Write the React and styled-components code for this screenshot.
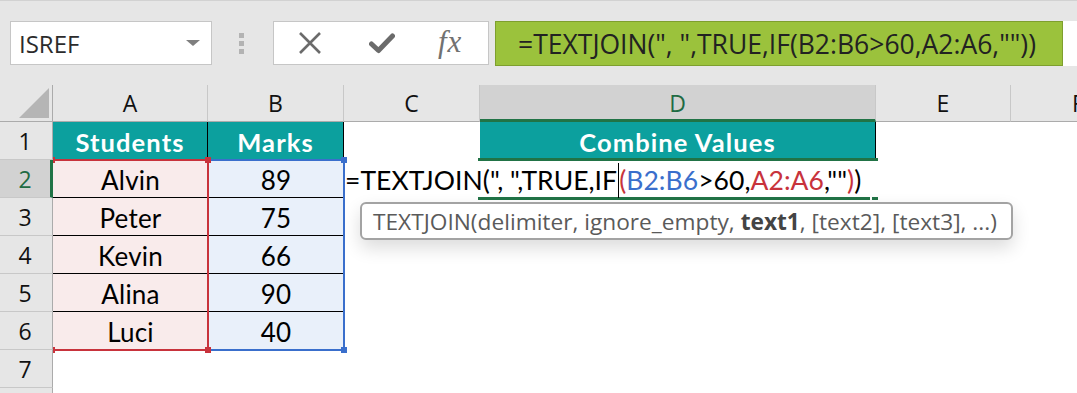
import React from 'react';
import styled, { createGlobalStyle } from 'styled-components';

const GlobalStyle = createGlobalStyle`
  html, body {
    margin: 0;
    padding: 0;
    background: #ffffff;
    overflow: hidden;
  }
  * { box-sizing: border-box; }
`;

const Page = styled.div`
  width: 1077px;
  height: 393px;
  overflow: hidden;
  display: flex;
  flex-direction: column;
  font-family: "Open Sans", "Liberation Sans", sans-serif;
`;

// ---------- formula toolbar ----------

const Toolbar = styled.div`
  height: 85px;
  flex: none;
  background: #e6e6e6;
  border-top: 1px solid #d2d2d2;
  display: flex;
  align-items: flex-start;
  padding: 20px 0 0 10px;
`;

const NameBox = styled.div`
  width: 202px;
  height: 44px;
  background: #fff;
  border: 1px solid #c6c6c6;
  display: flex;
  align-items: center;
  justify-content: space-between;
  padding: 0 11px 0 8px;
  font-size: 24px;
  color: #2b2b2b;
`;

const Caret = styled.span`
  width: 0;
  height: 0;
  border-left: 7px solid transparent;
  border-right: 7px solid transparent;
  border-top: 6px solid #7f7f7f;
`;

const Grip = styled.div`
  margin: 12px 0 0 27px;
  display: flex;
  flex-direction: column;
  gap: 3px;
  span {
    width: 5px;
    height: 5px;
    background: #b3b3b3;
  }
`;

const ButtonBox = styled.div`
  margin-left: 29px;
  width: 216px;
  height: 44px;
  background: #fff;
  border: 1px solid #c6c6c6;
  display: flex;
  align-items: center;
  padding-left: 24px;
`;

const IconSlot = styled.span`
  display: flex;
  align-items: center;
  margin-left: ${p => p.$gap || 0}px;
`;

const Fx = styled.span`
  margin-left: 43px;
  font-family: "Liberation Serif", "DejaVu Serif", serif;
  font-style: italic;
  font-size: 31px;
  color: #717171;
  line-height: 1;
  margin-top: -4px;
  letter-spacing: 1px;
`;

const FormulaField = styled.div`
  margin-left: 6px;
  flex: 1;
  height: 45px;
  background: #fff;
  display: flex;
`;

const FormulaHighlight = styled.div`
  width: 568px;
  height: 45px;
  background: #9bc23c;
  border: 1px solid #7e9f2e;
  display: flex;
  align-items: center;
  padding-left: 22px;
  font-size: 26.5px;
  color: #222;
  white-space: nowrap;
`;

// ---------- sheet ----------

const Sheet = styled.div`
  flex: 1;
  position: relative;
  overflow: hidden;
  display: grid;
  grid-template-columns: 53px 155px 136px 136px 396px 135px 135px;
  grid-template-rows: 37px repeat(8, 38px);
  background: #fff;
`;

const Corner = styled.div`
  grid-column: 1;
  grid-row: 1;
  background: #e6e6e6;
  border-right: 1px solid #ababab;
  border-bottom: 1px solid #ababab;
  display: flex;
  align-items: flex-end;
  justify-content: flex-end;
  padding: 0 3px 3px 0;
  position: relative;
  z-index: 3;
  &::after {
    content: "";
    width: 30px;
    height: 30px;
    background: #b5b5b5;
    clip-path: polygon(100% 0, 100% 100%, 0 100%);
  }
`;

const ColHead = styled.div`
  grid-row: 1;
  grid-column: ${p => p.$col};
  background: ${p => (p.$active ? '#d2d2d2' : '#e6e6e6')};
  border-right: 1px solid #c8c8c8;
  border-bottom: ${p => (p.$active ? '3px solid #217346' : '1px solid #ababab')};
  display: flex;
  align-items: center;
  justify-content: center;
  padding-top: ${p => (p.$active ? '2px' : '0')};
  font-size: 23px;
  color: ${p => (p.$active ? '#1f6b43' : '#111')};
`;

const RowHead = styled.div`
  grid-column: 1;
  grid-row: ${p => p.$row};
  position: relative;
  z-index: 3;
  background: ${p => (p.$active ? '#d2d2d2' : '#e6e6e6')};
  border-right: ${p => (p.$active ? '3px solid #217346' : '1px solid #ababab')};
  border-bottom: 1px solid #c8c8c8;
  display: flex;
  align-items: center;
  justify-content: center;
  padding-right: ${p => (p.$active ? '0' : '2px')};
  font-size: 23px;
  color: ${p => (p.$active ? '#1f6b43' : '#111')};
`;

const fills = {
  teal: '#0ca09e',
  pink: '#f9ebeb',
  blue: '#e9f0fa',
  none: 'transparent',
};

const Cell = styled.div`
  grid-column: ${p => p.$col};
  grid-row: ${p => p.$row};
  background: ${p => fills[p.$fill || 'none']};
  border-right: ${p => (p.$right ? '1px solid #000' : 'none')};
  border-bottom: ${p => (p.$bottom ? '1px solid #000' : 'none')};
  display: flex;
  align-items: center;
  justify-content: center;
  padding-top: 2px;
  font-family: "Lato", "Open Sans", sans-serif;
  font-size: ${p => (p.$bold ? '25.5px' : '26px')};
  letter-spacing: ${p => (p.$bold ? '1.1px' : '0.2px')};
  font-weight: ${p => (p.$bold ? 700 : 400)};
  color: ${p => (p.$bold ? '#fff' : '#000')};
`;

const RangeBox = styled.div`
  grid-column: ${p => p.$col};
  grid-row: ${p => p.$row} / span ${p => p.$span};
  margin: -1px;
  margin-left: ${p => (p.$openLeft ? '0' : '-1px')};
  border: 2px solid ${p => p.$color};
  border-left: ${p => (p.$openLeft ? 'none' : `2px solid ${p.$color}`)};
  position: relative;
  z-index: ${p => p.$z};
  pointer-events: none;
`;

const Handle = styled.span`
  position: absolute;
  width: 6px;
  height: 6px;
  background: ${p => p.$color};
  ${p => (p.$top ? 'top: -4px;' : 'bottom: -4px;')}
  ${p => (p.$left ? 'left: -4px;' : 'right: -4px;')}
`;

const ActiveCell = styled.div`
  grid-column: 5;
  grid-row: 3;
  margin: -2px -2px -2px -2px;
  border-top: 3px solid #217346;
  border-bottom: 3px solid #217346;
  position: relative;
  z-index: 2;
  &::after {
    content: "";
    position: absolute;
    right: 6px;
    bottom: -3px;
    width: 2px;
    height: 3px;
    background: #fff;
  }
`;

const EditText = styled.div`
  grid-column: 4 / span 2;
  grid-row: 3;
  z-index: 4;
  display: flex;
  align-items: center;
  padding: 2px 0 0 1px;
  white-space: pre;
  font-family: "Lato", "Open Sans", sans-serif;
  font-size: 26.5px;
  letter-spacing: 0.05px;
  color: #000;
`;

const Ref = styled.span`
  color: ${p => p.$color};
`;

const TextCaret = styled.span`
  display: inline-block;
  width: 0;
  height: 35px;
  border-left: 1px solid #000;
  margin: 0 0 0 1px;
  align-self: center;
`;

const TipAnchor = styled.div`
  grid-column: 4;
  grid-row: 4;
  position: relative;
  z-index: 5;
`;

const Tooltip = styled.div`
  position: absolute;
  left: 16px;
  top: 4px;
  width: 653px;
  height: 38px;
  background: #fff;
  border: 2px solid #a3a3a3;
  border-radius: 6px;
  box-shadow: 0 8px 18px rgba(0, 0, 0, 0.14);
  display: flex;
  align-items: center;
  padding-left: 11px;
  white-space: pre;
  font-size: 22.7px;
  color: #5a5a5a;
  b {
    font-weight: 700;
    color: #444;
  }
`;

const RED = '#c8333c';
const BLUE = '#3a6fcc';

const columns = ['A', 'B', 'C', 'D', 'E', 'F'];

const students = [
  ['Alvin', 89],
  ['Peter', 75],
  ['Kevin', 66],
  ['Alina', 90],
  ['Luci', 40],
];

function CloseIcon() {
  return (
    <svg width="24" height="22" viewBox="0 0 24 22">
      <path d="M2 1 L22 21 M22 1 L2 21" stroke="#6b6b6b" strokeWidth="2.6" fill="none" />
    </svg>
  );
}

function CheckIcon() {
  return (
    <svg width="26" height="21" viewBox="0 0 26 21">
      <path d="M2.5 11 L9.5 17.5 L23.5 3" stroke="#6b6b6b" strokeWidth="5" fill="none" strokeLinecap="round" strokeLinejoin="round" />
    </svg>
  );
}

function Corners({ color }) {
  return (
    <>
      <Handle $color={color} $top $left />
      <Handle $color={color} $top />
      <Handle $color={color} $left />
      <Handle $color={color} />
    </>
  );
}

export default function App() {
  return (
    <Page>
      <GlobalStyle />
      <Toolbar>
        <NameBox>
          ISREF
          <Caret />
        </NameBox>
        <Grip>
          <span />
          <span />
          <span />
        </Grip>
        <ButtonBox>
          <IconSlot><CloseIcon /></IconSlot>
          <IconSlot $gap={47}><CheckIcon /></IconSlot>
          <Fx>fx</Fx>
        </ButtonBox>
        <FormulaField>
          <FormulaHighlight>=TEXTJOIN(", ",TRUE,IF(B2:B6&gt;60,A2:A6,""))</FormulaHighlight>
        </FormulaField>
      </Toolbar>

      <Sheet>
        <Corner />
        {columns.map((c, i) => (
          <ColHead key={c} $col={i + 2} $active={c === 'D'}>{c}</ColHead>
        ))}
        {[1, 2, 3, 4, 5, 6, 7, 8].map(r => (
          <RowHead key={r} $row={r + 1} $active={r === 2}>{r < 8 ? r : ''}</RowHead>
        ))}

        <Cell $col={2} $row={2} $fill="teal" $bold $right>Students</Cell>
        <Cell $col={3} $row={2} $fill="teal" $bold $right>Marks</Cell>
        <Cell $col={5} $row={2} $fill="teal" $bold $right>Combine Values</Cell>

        {students.map(([name, mark], i) => (
          <React.Fragment key={name}>
            <Cell $col={2} $row={i + 3} $fill="pink" $bottom>{name}</Cell>
            <Cell $col={3} $row={i + 3} $fill="blue" $bottom>{mark}</Cell>
          </React.Fragment>
        ))}

        <RangeBox $col={3} $row={3} $span={5} $color={BLUE} $z={1}>
          <Corners color={BLUE} />
        </RangeBox>
        <RangeBox $col={2} $row={3} $span={5} $color={RED} $z={2} $openLeft>
          <Corners color={RED} />
        </RangeBox>

        <ActiveCell />
        <EditText>
          {'=TEXTJOIN(", ",TRUE,IF'}
          <TextCaret />
          <Ref $color={RED}>(</Ref>
          <Ref $color={BLUE}>B2:B6</Ref>
          {'>60,'}
          <Ref $color={RED}>A2:A6</Ref>
          {',""'}
          <Ref $color={RED}>)</Ref>
          {')'}
        </EditText>

        <TipAnchor>
          <Tooltip>
            {'TEXTJOIN(delimiter, ignore_empty, '}<b>text1</b>{', [text2], [text3], ...)'}
          </Tooltip>
        </TipAnchor>
      </Sheet>
    </Page>
  );
}
